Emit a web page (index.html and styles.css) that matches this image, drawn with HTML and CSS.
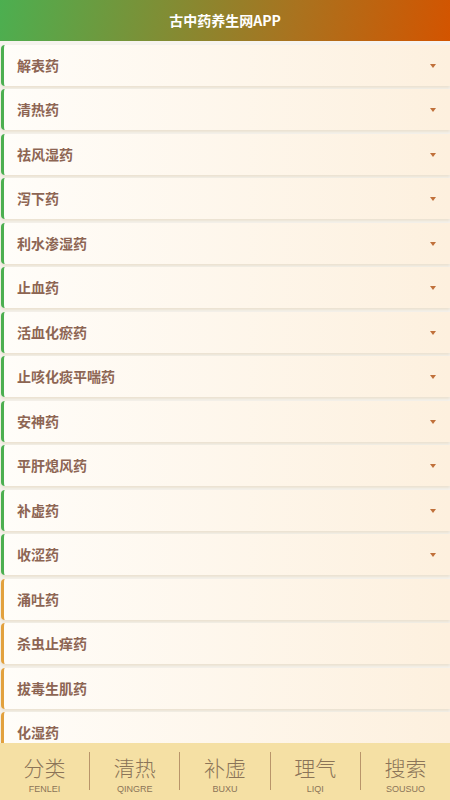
FILE: index.html
```html
<!DOCTYPE html>
<html lang="zh-CN">
<head>
    <meta charset="UTF-8">
    <meta name="viewport" content="width=device-width, initial-scale=1.0">
    <title>古中药养生网APP</title>
    <link rel="stylesheet" href="styles.css">
</head>
<body>
    <header class="top-bar">古中药养生网APP</header>

    <ul class="cat-list">
        <li class="cat-item has-sub">解表药</li>
        <li class="cat-item has-sub">清热药</li>
        <li class="cat-item has-sub">祛风湿药</li>
        <li class="cat-item has-sub">泻下药</li>
        <li class="cat-item has-sub">利水渗湿药</li>
        <li class="cat-item has-sub">止血药</li>
        <li class="cat-item has-sub">活血化瘀药</li>
        <li class="cat-item has-sub">止咳化痰平喘药</li>
        <li class="cat-item has-sub">安神药</li>
        <li class="cat-item has-sub">平肝熄风药</li>
        <li class="cat-item has-sub">补虚药</li>
        <li class="cat-item has-sub">收涩药</li>
        <li class="cat-item">涌吐药</li>
        <li class="cat-item">杀虫止痒药</li>
        <li class="cat-item">拔毒生肌药</li>
        <li class="cat-item">化湿药</li>
        <li class="cat-item">理气药</li>
    </ul>

    <nav class="tab-bar">
        <a class="tab"><span class="tab-cn">分类</span><span class="tab-py">FENLEI</span></a>
        <a class="tab"><span class="tab-cn">清热</span><span class="tab-py">QINGRE</span></a>
        <a class="tab"><span class="tab-cn">补虚</span><span class="tab-py">BUXU</span></a>
        <a class="tab"><span class="tab-cn">理气</span><span class="tab-py">LIQI</span></a>
        <a class="tab"><span class="tab-cn">搜索</span><span class="tab-py">SOUSUO</span></a>
    </nav>
</body>
</html>
```

FILE: styles.css
```css
body {
    margin: 0;
    background-color: #f6f3ee;
    font-family: "Noto Sans CJK SC", "Noto Sans", sans-serif;
}
.top-bar {
    height: 41px;
    line-height: 40px;
    text-align: center;
    color: #fff;
    font-size: 14px;
    font-weight: bold;
    background: linear-gradient(100deg, #4caf50 0%, #a9731f 65%, #d35400 100%);
}
.cat-list {
    list-style: none;
    margin: 0;
    padding: 0 0 60px 1px;
}
.cat-item {
    position: relative;
    height: 41px;
    line-height: 41px;
    margin-top: 3.5px;
    padding-left: 13px;
    border-left: 3px solid #4caf50;
    border-radius: 4px 0 0 4px;
    background: linear-gradient(90deg, #fffdf9 0%, #fdf0de 100%);
    box-shadow: 0 2px 3px rgba(200, 170, 120, 0.25);
    color: #8d6553;
    font-size: 14px;
    font-weight: bold;
}
.cat-item:not(.has-sub) {
    border-left-color: #e2a13e;
}
.cat-item.has-sub::after {
    content: '';
    position: absolute;
    right: 14px;
    top: 19px;
    border-left: 3.5px solid transparent;
    border-right: 3.5px solid transparent;
    border-top: 4px solid #c0703a;
}
.tab-bar {
    position: fixed;
    left: 0;
    right: 0;
    bottom: 0;
    height: 57px;
    display: flex;
    align-items: flex-start;
    padding-top: 9px;
    box-sizing: border-box;
    background-color: #f5e0a4;
}
.tab {
    flex: 1;
    display: flex;
    flex-direction: column;
    align-items: center;
    height: 38px;
    color: #8b7458;
    border-right: 1px solid #b9956a;
}
.tab:last-child {
    border-right: none;
}
.tab-cn {
    font-size: 21px;
    font-weight: 300;
    line-height: 30px;
}
.tab-py {
    font-family: "Liberation Sans", sans-serif;
    font-size: 9px;
    line-height: 10px;
    margin-top: 2px;
}
```
